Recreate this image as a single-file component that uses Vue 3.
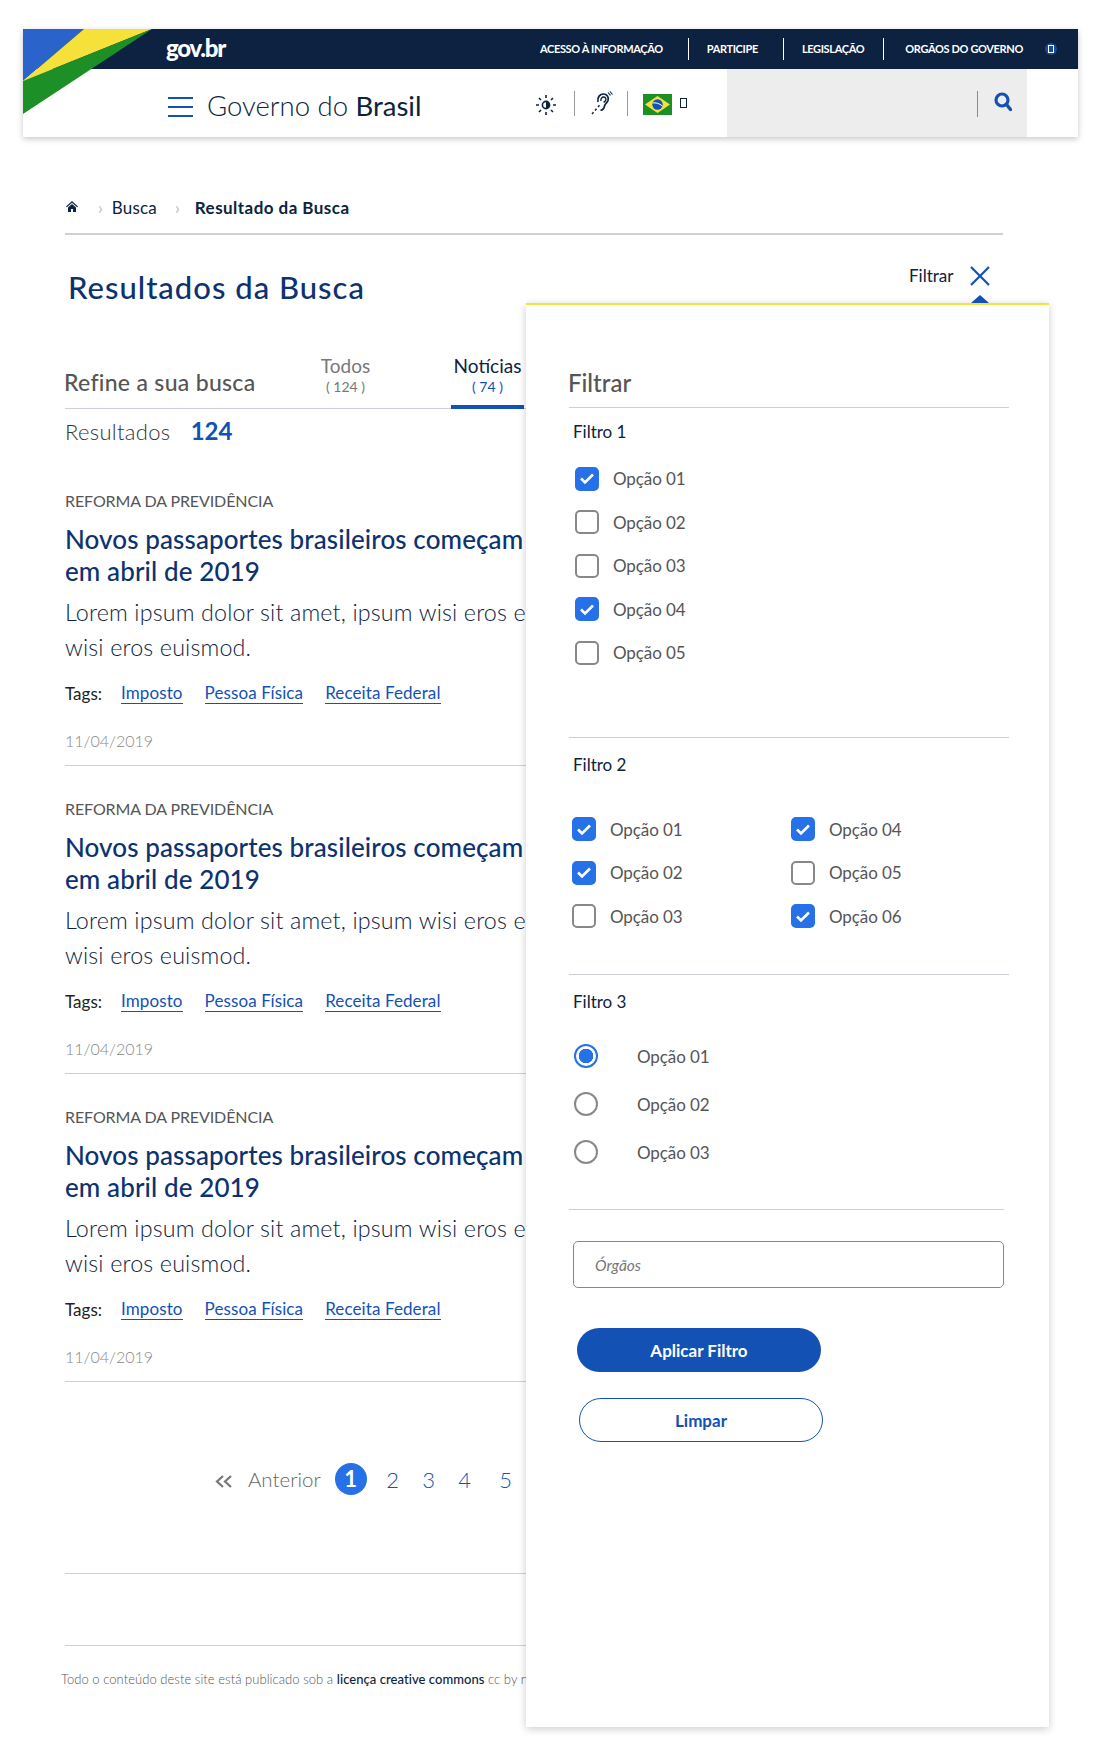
<template>
  <div class="page">
    <header class="site-header">
      <svg class="header-wedge" width="129" height="85" viewBox="0 0 129 85">
        <polygon points="0,0 61,0 0,52" fill="#2a63c9" />
        <polygon points="61,0 129,0 0,52" fill="#f6e03a" />
        <polygon points="129,0 0,52 0,85" fill="#1d8f27" />
      </svg>
      <div class="top-bar">
        <span class="logo">gov.br</span>
        <nav class="top-nav">
          <a v-for="item in topLinks" :key="item" class="top-link">{{ item }}</a>
        </nav>
        <span class="top-badge"><i class="tofu tofu--light"></i></span>
      </div>
      <div class="main-bar">
        <div class="burger"><i></i><i></i><i></i></div>
        <div class="brand">Governo do <b>Brasil</b></div>
        <svg class="icon-contrast" width="22" height="22" viewBox="0 0 22 22">
          <circle cx="11" cy="11" r="3.6" fill="none" stroke="#0c2340" stroke-width="1.6" />
          <path d="M11 7.4a3.6 3.6 0 0 1 0 7.2z" fill="#0c2340" />
          <path d="M11 1v3M11 18v3M1 11h3M18 11h3M4 4l2 2M16 16l2 2M18 4l-2 2M6 16l-2 2" stroke="#0c2340" stroke-width="1.6" />
        </svg>
        <span class="v-rule"></span>
        <svg class="icon-ear" width="22" height="24" viewBox="0 0 22 24">
          <path d="M7 11c-1-5 2-8 5.500-8 3.500 0 5.500 3 4.500 6.500-.8 2.500-3 3-3.500 5.500-.5 2.500-2 4.500-4 4" fill="none" stroke="#0c2340" stroke-width="1.7" />
          <path d="M10 10c-.5-2.500 1-4 2.700-4 1.800 0 2.600 1.800 2 3.300-.4 1-1.500 1.400-2 2.200" fill="none" stroke="#0c2340" stroke-width="1.4" />
          <path d="M17 1.500l2.500 2.800M19 .5l2.500 3" stroke="#0c2340" stroke-width="1.1" />
          <path d="M1 23l1.500-1.700M4 19.500l1.500-1.700M7 16l1.500-1.700" stroke="#0c2340" stroke-width="1.5" />
        </svg>
        <span class="v-rule v-rule--flag"></span>
        <svg class="flag" width="29" height="21" viewBox="0 0 29 21">
          <rect width="29" height="21" fill="#1d8f27" />
          <polygon points="14.500,2 27,10.500 14.500,19 2,10.500" fill="#f6e03a" />
          <circle cx="14.500" cy="10.500" r="5.200" fill="#1351b4" />
          <path d="M9.600 9c3-.6 7 .4 9.700 3" fill="none" stroke="#fff" stroke-width="1" />
        </svg>
        <i class="tofu tofu--dark"></i>
        <div class="search-box">
          <span class="search-rule"></span>
          <svg class="search-icon" width="18" height="20" viewBox="0 0 18 20">
            <circle cx="8" cy="8" r="6" fill="none" stroke="#1351b4" stroke-width="3.200" />
            <path d="M12.500 12.500l4 5" stroke="#1351b4" stroke-width="3.400" stroke-linecap="round" />
          </svg>
        </div>
      </div>
    </header>

    <main class="content">
      <nav class="crumbs">
        <svg class="crumb-home" width="12" height="11" viewBox="0 0 12 11">
          <path d="M6 0l6 5.400-.9.900L6 1.800.9 6.300 0 5.400z M2 6.400L6 3l4 3.400V11H7V8H5v3H2z" fill="#0c2340" />
        </svg>
        <span class="crumb-sep">›</span>
        <span class="crumb">Busca</span>
        <span class="crumb-sep crumb-sep--wide">›</span>
        <strong class="crumb crumb--current">Resultado da Busca</strong>
      </nav>

      <h1 class="page-title">Resultados da Busca</h1>

      <div class="tabs">
        <h2 class="refine">Refine a sua busca</h2>
        <div class="tab">
          <span class="tab-name">Todos</span>
          <span class="tab-count">( 124 )</span>
        </div>
        <div class="tab tab--active">
          <span class="tab-name">Notícias</span>
          <span class="tab-count">( 74 )</span>
        </div>
      </div>

      <div class="total">Resultados <b>124</b></div>

      <article v-for="n in 3" :key="n" class="result">
        <div class="result-cat">REFORMA DA PREVIDÊNCIA</div>
        <h3 class="result-title">Novos passaportes brasileiros começam<br />em abril de 2019</h3>
        <p class="result-text">Lorem ipsum dolor sit amet, ipsum wisi eros e<br />wisi eros euismod.</p>
        <div class="result-tags">
          <span class="tags-label">Tags:</span>
          <a v-for="tag in tags" :key="tag" class="tag">{{ tag }}</a>
        </div>
        <div class="result-date">11/04/2019</div>
      </article>

      <div class="pager">
        <svg class="pager-prev" width="17" height="13" viewBox="0 0 17 13">
          <path d="M8 1L2 6.500 8 12M16 1l-6 5.500 6 5.500" fill="none" stroke="#777" stroke-width="2.200" />
        </svg>
        <span class="pager-label">Anterior</span>
        <span class="pager-current">1</span>
        <span v-for="p in [2, 3, 4]" :key="p" class="pager-num">{{ p }}</span>
        <span class="pager-num pager-num--last">5</span>
      </div>

      <div class="foot-rule foot-rule--first"></div>
      <div class="foot-rule foot-rule--second"></div>
      <p class="foot-note">
        Todo o conteúdo deste site está publicado sob a <b>licença creative commons</b> cc by n
      </p>
    </main>

    <div class="filter-toggle">
      <span>Filtrar</span>
      <svg width="20" height="20" viewBox="0 0 20 20">
        <path d="M1 1l18 18M19 1L1 19" stroke="#1351b4" stroke-width="2.200" />
      </svg>
    </div>

    <aside class="filter-panel">
      <span class="panel-arrow"></span>
      <h2 class="panel-title">Filtrar</h2>

      <section class="group group--one">
        <h3 class="group-title">Filtro 1</h3>
        <div class="check-list">
          <label v-for="opt in filterOne" :key="opt.label" class="check">
            <span class="box" :class="{ 'box--on': opt.on }">
              <svg v-if="opt.on" width="16" height="13" viewBox="0 0 16 13">
                <path d="M2 6.500l4 4L14 2.500" fill="none" stroke="#fff" stroke-width="2.600" />
              </svg>
            </span>
            {{ opt.label }}
          </label>
        </div>
      </section>

      <section class="group group--two">
        <h3 class="group-title">Filtro 2</h3>
        <div class="check-grid">
          <label v-for="opt in filterTwo" :key="opt.label" class="check">
            <span class="box" :class="{ 'box--on': opt.on }">
              <svg v-if="opt.on" width="16" height="13" viewBox="0 0 16 13">
                <path d="M2 6.500l4 4L14 2.500" fill="none" stroke="#fff" stroke-width="2.600" />
              </svg>
            </span>
            {{ opt.label }}
          </label>
        </div>
      </section>

      <section class="group group--three">
        <h3 class="group-title">Filtro 3</h3>
        <div class="radio-list">
          <label v-for="(opt, i) in filterThree" :key="opt" class="radio">
            <span class="dot" :class="{ 'dot--on': i === 0 }"></span>
            {{ opt }}
          </label>
        </div>
      </section>

      <input class="orgaos" type="text" placeholder="Órgãos" />
      <button class="btn btn--primary" type="button">Aplicar Filtro</button>
      <button class="btn btn--ghost" type="button">Limpar</button>
    </aside>
  </div>
</template>

<script setup>
const topLinks = ['Acesso à informação', 'Participe', 'Legislação', 'Orgãos do governo']
const tags = ['Imposto', 'Pessoa Física', 'Receita Federal']

const filterOne = [
  { label: 'Opção 01', on: true },
  { label: 'Opção 02', on: false },
  { label: 'Opção 03', on: false },
  { label: 'Opção 04', on: true },
  { label: 'Opção 05', on: false },
]

const filterTwo = [
  { label: 'Opção 01', on: true },
  { label: 'Opção 04', on: true },
  { label: 'Opção 02', on: true },
  { label: 'Opção 05', on: false },
  { label: 'Opção 03', on: false },
  { label: 'Opção 06', on: true },
]

const filterThree = ['Opção 01', 'Opção 02', 'Opção 03']
</script>

<style>
body {
  background: #fff;
}
</style>

<style scoped>
.page {
  position: relative;
  width: 1100px;
  height: 1760px;
  overflow: hidden;
  background: #fff;
  font-family: Lato, "Open Sans", sans-serif;
  color: #0c2340;
}

h1, h2, h3, p {
  margin: 0;
}

/* header */
.site-header {
  position: relative;
  margin: 29px 22px 0 23px;
  height: 108px;
  background: #fff;
  box-shadow: 0 2px 6px rgba(0, 0, 0, 0.22);
}

.header-wedge {
  position: absolute;
  left: 0;
  top: 0;
  z-index: 1;
}

.top-bar {
  display: flex;
  align-items: center;
  height: 40px;
  background: #0d2141;
  color: #fff;
  padding-left: 143px;
}

.logo {
  margin-top: -3px;
  font-size: 24px;
  font-weight: 900;
  letter-spacing: -1.2px;
}

.top-nav {
  display: flex;
  align-items: center;
  margin-left: auto;
}

.top-link {
  display: flex;
  align-items: center;
  height: 22px;
  padding: 0 25px 0 18px;
  border-left: 1px solid #fff;
  font-size: 11px;
  font-weight: 700;
  letter-spacing: -0.35px;
  text-transform: uppercase;
  margin-top: -1px;
}

.top-link:first-child {
  border-left: 0;
}

.top-link:nth-child(3) {
  padding-right: 19px;
}

.top-link:nth-child(4) {
  padding-left: 21px;
  padding-right: 17px;
}

.top-badge {
  display: flex;
  align-items: center;
  justify-content: center;
  width: 12px;
  height: 12px;
  margin: 0 21px 0 5px;
  border-radius: 50%;
  background: #1c4a94;
}

.tofu {
  display: block;
  width: 6px;
  height: 8px;
  border: 1px solid;
  box-sizing: border-box;
}

.tofu--light {
  border-color: #fff;
}

.tofu--dark {
  border-color: #0c2340;
  height: 10px;
  width: 7px;
  margin: 0 0 0 8px;
}

.main-bar {
  display: flex;
  align-items: center;
  height: 68px;
  padding-left: 145px;
}

.burger {
  width: 25px;
  display: flex;
  flex-direction: column;
  gap: 7px;
  margin-top: 7px;
}

.burger i {
  display: block;
  height: 2px;
  background: #1351b4;
}

.brand {
  margin: 5px 0 0 14px;
  width: 316px;
  font-size: 27.500px;
  font-weight: 300;
  white-space: nowrap;
}

.brand b {
  font-weight: 400;
}

.icon-contrast {
  margin: 3px 0 0 12px;
}

.v-rule {
  width: 1px;
  height: 25px;
  margin: 1px 16px 0 17px;
  background: #999;
}

.v-rule--flag {
  margin-right: 15px;
  margin-left: 14px;
}

.flag {
  margin-top: 3px;
}

.search-box {
  position: relative;
  align-self: stretch;
  width: 300px;
  margin-left: auto;
  margin-right: 51px;
  background: #ededed;
}

.search-rule {
  position: absolute;
  left: 250px;
  top: 22px;
  width: 1px;
  height: 26px;
  background: #8a8a8a;
}

.search-icon {
  position: absolute;
  left: 267px;
  top: 23px;
}

/* main column */
.content {
  width: 938px;
  margin-left: 65px;
}

.crumbs {
  display: flex;
  align-items: center;
  height: 20px;
  margin-top: 60px;
  padding-bottom: 16px;
  border-bottom: 2px solid #ccd0dc;
  font-size: 17px;
}

.crumb-home {
  margin: -2px 0 0 1px;
}

.crumb-sep {
  margin: 0 9px 0 20px;
  color: #b8bcc8;
}

.crumb-sep--wide {
  margin: 0 15px 0 18px;
}

.crumb {
  letter-spacing: 0.2px;
}

.crumb--current {
  font-weight: 700;
  letter-spacing: 0.45px;
}

.page-title {
  margin: 34px 0 0 3px;
  font-size: 31px;
  line-height: 36px;
  font-weight: 500;
  letter-spacing: 1px;
  color: #0c326f;
}

.tabs {
  display: flex;
  align-items: flex-end;
  height: 55px;
  margin-top: 48px;
  border-bottom: 1px solid #ccd0dc;
}

.refine {
  width: 245px;
  margin-left: -1px;
  padding-bottom: 13px;
  font-size: 23px;
  line-height: 26px;
  font-weight: 500;
  letter-spacing: 0.3px;
  color: #555;
}

.tab {
  display: flex;
  flex-direction: column;
  align-items: center;
  width: 73px;
  height: 54px;
  margin-right: 69px;
  color: #777;
}

.tab-name {
  font-size: 19px;
  line-height: 23px;
}

.tab-count {
  font-size: 14px;
  line-height: 19px;
}

.tab--active {
  height: 51px;
  border-bottom: 4px solid #1351b4;
  margin-bottom: -1px;
}

.tab--active .tab-name {
  color: #0c2340;
}

.tab--active .tab-count {
  color: #1351b4;
}

.total {
  margin-top: 7px;
  font-size: 22px;
  line-height: 30px;
  font-weight: 300;
  letter-spacing: 0.3px;
  color: #333;
}

.total b {
  margin-left: 14px;
  font-size: 24px;
  font-weight: 700;
  letter-spacing: 0;
  color: #1351b4;
}

.result {
  padding-top: 33px;
  padding-bottom: 14px;
  border-bottom: 1px solid #ccd0dc;
}

.total + .result {
  margin-top: 11px;
}

.result-cat {
  font-size: 16px;
  line-height: 20px;
  letter-spacing: -0.1px;
  color: #555;
}

.result-title {
  margin-top: 12px;
  font-size: 26px;
  line-height: 32px;
  font-weight: 500;
  letter-spacing: 0.1px;
  color: #0c326f;
}

.result-text {
  margin-top: 8px;
  font-size: 23.300px;
  line-height: 35px;
  font-weight: 300;
  letter-spacing: 0.15px;
  color: #0c2340;
  white-space: nowrap;
}

.result-tags {
  display: flex;
  align-items: center;
  margin-top: 17px;
  height: 22px;
  font-size: 17px;
}

.tags-label {
  width: 56px;
  color: #222;
}

.tag {
  margin-right: 22px;
  border-bottom: 1px solid #1351b4;
  letter-spacing: 0.1px;
  color: #1351b4;
}

.result-date {
  margin-top: 27px;
  font-size: 16px;
  line-height: 20px;
  font-weight: 300;
  color: #888;
}

.pager {
  display: flex;
  align-items: center;
  height: 32px;
  margin-top: 81px;
  padding-left: 150px;
  color: #1351b4;
}

.pager-prev {
  margin-top: 4px;
}

.pager-label {
  margin: 0 14px 0 16px;
  font-size: 20.500px;
  font-weight: 300;
  color: #666;
}

.pager-current {
  width: 32px;
  height: 32px;
  margin-right: 8px;
  border-radius: 50%;
  background: #2670e8;
  color: #fff;
  font-size: 22px;
  font-weight: 700;
  line-height: 32px;
  text-align: center;
}

.pager-num {
  width: 36px;
  font-size: 22px;
  font-weight: 300;
  text-align: center;
}

.pager-num--last {
  margin-left: 5px;
}

.foot-rule {
  height: 1px;
  background: #ccd0dc;
}

.foot-rule--first {
  margin-top: 78px;
}

.foot-rule--second {
  margin-top: 71px;
}

.foot-note {
  margin: 24px 0 0 -4px;
  font-size: 13px;
  line-height: 18px;
  font-weight: 300;
  letter-spacing: 0.05px;
  color: #555;
  white-space: nowrap;
}

.foot-note b {
  font-weight: 500;
  color: #0c2340;
}

/* filter panel */
.filter-toggle {
  position: absolute;
  left: 909px;
  top: 265px;
  display: flex;
  align-items: center;
  gap: 17px;
  font-size: 17px;
}

.filter-panel {
  position: absolute;
  left: 526px;
  top: 303px;
  width: 523px;
  height: 1424px;
  box-sizing: border-box;
  padding-left: 43px;
  background: #fff;
  border-top: 2px solid #f6e03a;
  box-shadow: 0 2px 8px rgba(0, 0, 0, 0.2);
}

.panel-arrow {
  position: absolute;
  left: 445px;
  top: -10px;
  border-left: 9px solid transparent;
  border-right: 9px solid transparent;
  border-bottom: 8px solid #1351b4;
}

.panel-title {
  width: 440px;
  margin-top: 63px;
  padding-bottom: 9px;
  border-bottom: 1px solid #ccd0dc;
  font-size: 24px;
  line-height: 30px;
  font-weight: 500;
  text-indent: -1px;
  color: #555;
}

.group {
  width: 440px;
  border-bottom: 1px solid #ccd0dc;
}

.group-title {
  margin-left: 4px;
  font-size: 17px;
  line-height: 20px;
  font-weight: 400;
}

.group--one {
  padding: 14px 0 62px;
}

.group--two {
  padding: 17px 0 36px;
}

.group--three {
  padding: 17px 0 33px;
  width: 435px;
}

.check-list {
  margin: 15px 0 0 6px;
  display: grid;
  grid-auto-rows: 43.500px;
}

.check-grid {
  margin: 33px 0 0 3px;
  display: grid;
  grid-template-columns: 219px 1fr;
  grid-auto-rows: 43.500px;
}

.check {
  display: flex;
  align-items: center;
  gap: 14px;
  font-size: 17px;
  letter-spacing: -0.1px;
  color: #555;
}

.box {
  display: flex;
  align-items: center;
  justify-content: center;
  width: 24px;
  height: 24px;
  box-sizing: border-box;
  border: 2px solid #888;
  border-radius: 5px;
  background: #fff;
}

.box--on {
  border-color: #2670e8;
  background: #2670e8;
}

.radio-list {
  margin: 20px 0 0 5px;
  display: grid;
  grid-auto-rows: 48px;
}

.radio {
  display: flex;
  align-items: center;
  gap: 39px;
  font-size: 17px;
  letter-spacing: -0.1px;
  color: #555;
}

.dot {
  width: 24px;
  height: 24px;
  box-sizing: border-box;
  border: 2px solid #888;
  border-radius: 50%;
  background: #fff;
}

.dot--on {
  border-color: #2670e8;
  background: radial-gradient(circle, #2670e8 0 7px, #fff 7.500px);
}

.orgaos {
  display: block;
  width: 431px;
  height: 47px;
  box-sizing: border-box;
  margin: 31px 0 0 4px;
  padding: 0 21px;
  border: 1px solid #888;
  border-radius: 5px;
  background: #fff;
  font-family: inherit;
  font-size: 15.500px;
  font-style: italic;
}

.orgaos::placeholder {
  color: #777;
  opacity: 1;
}

.btn {
  display: block;
  height: 44px;
  border-radius: 22px;
  font-family: inherit;
  font-size: 17px;
  font-weight: 700;
  text-align: center;
}

.btn--primary {
  width: 244px;
  margin: 40px 0 0 8px;
  border: 0;
  background: #1351b4;
  color: #fff;
}

.btn--ghost {
  width: 244px;
  margin: 26px 0 0 10px;
  border: 1px solid #1351b4;
  background: #fff;
  color: #1351b4;
}
</style>
